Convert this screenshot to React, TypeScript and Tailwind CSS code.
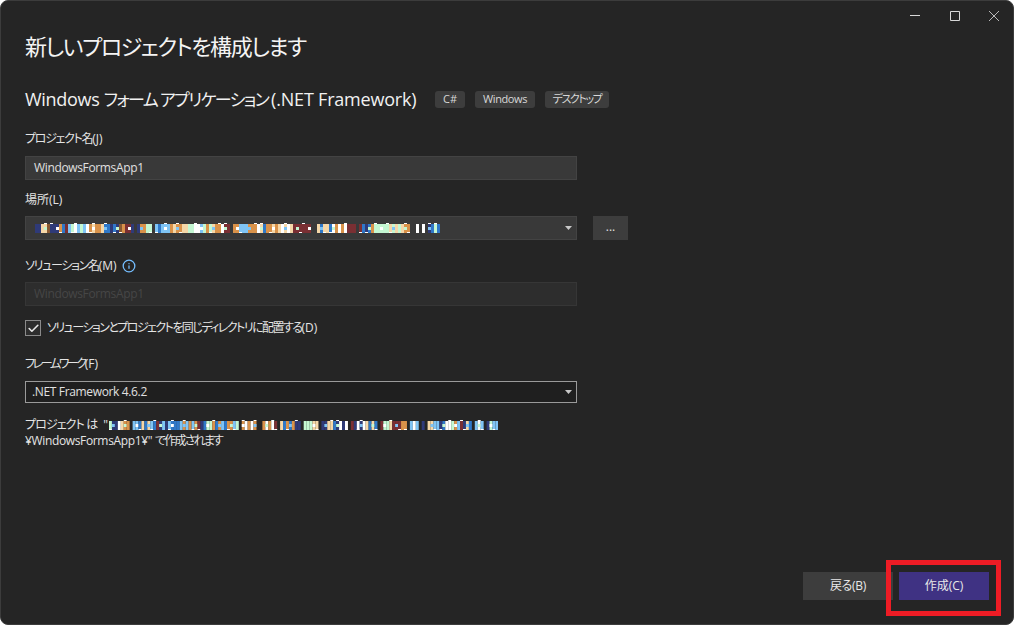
import { Check, Info } from "lucide-react";

const FONT = "font-['Open_Sans','Noto_Sans_CJK_JP',sans-serif] [font-feature-settings:'palt']";

const COLORS: Record<string, string> = {
  n: "#2f3a78",
  o: "#d9924a",
  b: "#8a5a33",
  r: "#7a2f33",
  l: "#7fc4f5",
  m: "#c4f7d2",
  B: "#2f78c8",
  w: "#ffffff",
  t: "#f5d7a8",
};

// redacted path, one letter for each column of the mosaic
const LOCATION_CELLS =
  "..nnttbnnnoBrlmwlmlwotootBBnBnborrn.noomm.lBlllotoottmmwwlmomtoowrr.oolllooowtBoototwtwtrrrrrr..tBttBwowowrrr.rBnBommmmmtmtmtoo..w.w.nBmB";
const SUMMARY_CELLS =
  "mnnwtoo.llBtBtlBrnlnlBBBlololornBmmoBolBoolm.owowo..owowr.tBoBonn.mmmtt.nnttBnwnw.rnwnwtBtB.rmmtrrroo.lwl.n.ttllnBwwmolrntB.lwl.nmll";

function Mosaic({ cells, cell }: { cells: string; cell: number }) {
  return (
    <svg width={cells.length * cell} height={13} className="mt-[1px] shrink-0">
      {cells.split("").map((c, i) => {
        if (c === ".") return null;
        const fill = COLORS[c];
        const dash = i % 5 === 0 || i % 7 === 0;
        return (
          <g key={i}>
            <rect x={i * cell} y={2} width={cell} height={9} fill={fill} />
            {i % 4 === 1 && <rect x={i * cell} y={5} width={cell} height={3} fill={COLORS["wlmt"[i % 3]]} />}
            {dash && <rect x={i * cell} y={i % 2 ? 1 : 10} width={cell} height={1} fill="#ffffff" />}
          </g>
        );
      })}
    </svg>
  );
}

function Caret() {
  return (
    <svg width="7" height="4" viewBox="0 0 7 4" className="ml-auto mr-[2px] shrink-0">
      <path d="M0 0h7L3.5 4z" fill="#c8c8c8" />
    </svg>
  );
}

function Tag({ children, className }: { children: string; className: string }) {
  return (
    <span className={`flex h-[17px] items-center justify-center rounded-[3px] bg-[#3d3d3d] text-[11px] text-[#d8d8d8] ${className}`}>
      {children}
    </span>
  );
}

export default function App() {
  return (
    <div className={`${FONT} h-[625px] w-[1014px] overflow-hidden bg-white`}>
      <div className="relative flex h-full flex-col rounded-[8px] border border-[#3c3c3c] bg-[#252525] pl-[24px]">
        <div className="absolute right-0 top-0 flex h-[29px] items-center">
          <button className="flex w-[40px] justify-center">
            <svg width="10" height="10" viewBox="0 0 10 10">
              <path d="M0 4.5h10" stroke="#d8d8d8" strokeWidth="1" />
            </svg>
          </button>
          <button className="flex w-[40px] justify-center">
            <svg width="10" height="10" viewBox="0 0 10 10">
              <path d="M.5.5h9v9h-9z" fill="none" stroke="#d8d8d8" strokeWidth="1" />
            </svg>
          </button>
          <button className="flex w-[38px] justify-center">
            <svg width="10" height="10" viewBox="0 0 10 10">
              <path d="M0 0l10 10M10 0L0 10" stroke="#b8b8b8" strokeWidth="1" />
            </svg>
          </button>
        </div>

        <h1 className="mt-[29px] h-[32px] text-[22px] font-normal leading-[32px] tracking-[-1.45px] text-[#f4f4f4]">
          新しいプロジェクトを構成します
        </h1>

        <div className="mt-[24px] flex h-[26px] items-center">
          <span className="whitespace-nowrap text-[18px] leading-[26px] text-[#f1f1f1]">
            <span className="tracking-[-0.3px]">Windows </span>
            <span className="text-[17px] tracking-[-1.6px]">フォーム アプリケーション </span>
            <span className="tracking-[-0.2px]">(.NET Framework)</span>
          </span>
          <div className="absolute left-[434px] flex gap-[10px]">
            <Tag className="w-[30px]">C#</Tag>
            <Tag className="w-[60px] tracking-[-0.4px]">Windows</Tag>
            <Tag className="w-[64px] tracking-[-1.4px]">デスクトップ</Tag>
          </div>
        </div>

        <div className="mt-[19px] flex h-[16px] items-center text-[12px] text-[#e4e4e4]">
          <span className="tracking-[-1.3px]">プロジェクト名</span>(J)
        </div>
        <div className="mt-[9px] flex h-[24px] w-[552px] items-center border border-[#434343] bg-[#393939] px-[8px] text-[12px] tracking-[-0.35px] text-[#e0e0e0]">
          WindowsFormsApp1
        </div>

        <div className="mt-[12px] flex h-[16px] items-center text-[12px] text-[#e4e4e4]">場所(L)</div>
        <div className="mt-[8px] flex gap-[16px]">
          <div className="flex h-[24px] w-[552px] items-center border border-[#434343] bg-[#393939] pl-[3px] pr-[2px]">
            <Mosaic cells={LOCATION_CELLS} cell={3} />
            <Caret />
          </div>
          <button className="flex h-[24px] w-[35px] items-center justify-center bg-[#3d3d3d] pb-[2px] text-[12px] text-[#e0e0e0]">
            ...
          </button>
        </div>

        <div className="mt-[18px] flex h-[16px] items-center text-[12px] text-[#e4e4e4]">
          <span className="tracking-[-1.3px]">ソリューション名</span>(M)
          <Info size={14} strokeWidth={2.2} className="ml-[5px] text-[#75beff]" />
        </div>
        <div className="mt-[8px] flex h-[24px] w-[552px] items-center border border-[#363636] bg-[#2d2d2d] px-[8px] text-[12px] tracking-[-0.35px] text-[#464646]">
          WindowsFormsApp1
        </div>

        <div className="mt-[14px] flex h-[16px] items-center gap-[6px]">
          <span className="flex h-[16px] w-[16px] items-center justify-center border border-[#8a8a8a] bg-[#2d2d2d]">
            <Check size={13} strokeWidth={3} className="text-[#e8e8e8]" />
          </span>
          <span className="text-[12px] text-[#e4e4e4]">
            <span className="tracking-[-1.55px]">ソリューションとプロジェクトを同じディレクトリに配置する</span>(D)
          </span>
        </div>

        <div className="mt-[20px] flex h-[16px] items-center text-[12px] text-[#e4e4e4]">
          <span className="tracking-[-2.4px]">フレームワーク</span>(F)
        </div>
        <div className="mt-[9px] flex h-[22px] w-[552px] items-center border border-[#9a9a9a] bg-[#1f1f1f] pl-[6px] pr-[2px] text-[12px] tracking-[-0.35px] text-[#e0e0e0]">
          .NET Framework 4.6.2
          <Caret />
        </div>

        <div className="mt-[14px] flex h-[16px] items-center text-[12px] text-[#e4e4e4]">
          <span className="tracking-[-0.9px]">プロジェクト は</span>
          <span className="ml-[6px] mr-[1px]">"</span>
          <Mosaic cells={SUMMARY_CELLS} cell={2.95} />
        </div>
        <div className="h-[16px] text-[12px] leading-[16px] text-[#e4e4e4]">
          <span className="tracking-[-0.35px]">¥WindowsFormsApp1¥" </span>
          <span className="tracking-[-1.8px]">で作成されます</span>
        </div>

        <div className="mt-auto mb-[24px] flex justify-end gap-[6px] pr-[24px]">
          <button className="h-[28px] w-[90px] bg-[#3d3d3d] text-[12px] tracking-[-0.3px] text-[#e8e8e8]">戻る(B)</button>
          <button className="h-[28px] w-[90px] bg-[#3f3283] text-[12px] text-[#e8e8e8]">作成(C)</button>
        </div>

        <div className="absolute left-[885px] top-[559px] h-[56px] w-[115px] border-[5px] border-[#ee1c25]" />
      </div>
    </div>
  );
}
